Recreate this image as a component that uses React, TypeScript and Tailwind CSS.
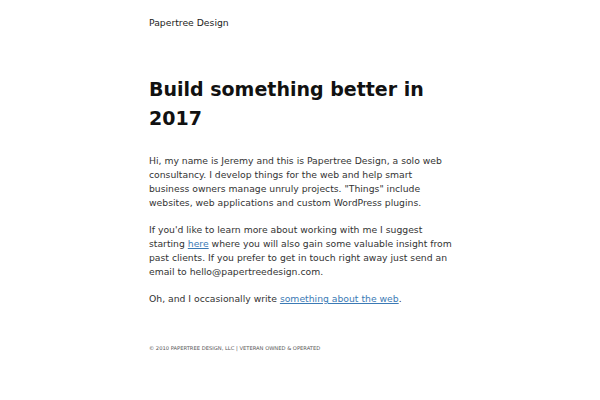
export default function App() {
  return (
    <div className="min-h-[400px] bg-white" style={{ fontFamily: '"DejaVu Sans", sans-serif' }}>
      <div className="ml-[149px] w-[306px] pt-[16px]">
        <div className="text-[9.25px] leading-[14px] text-[#222]">Papertree Design</div>
        <h1 className="mt-[45px] text-[19px] font-bold leading-[29px] text-[#111]">
          Build something better in 2017
        </h1>
        <div className="mt-[21px] text-[9.25px] leading-[14px] text-[#333]">
          <p>
            Hi, my name is Jeremy and this is Papertree Design, a solo web consultancy. I develop things for the web and help smart business owners manage unruly projects. "Things" include websites, web applications and custom WordPress plugins.
          </p>
          <p className="mt-[13px]">
            If you'd like to learn more about working with me I suggest starting{" "}
            <a className="text-[#3b7ab5] underline">here</a> where you will also gain some valuable insight from past clients. If you prefer to get in touch right away just send an email to hello@papertreedesign.com.
          </p>
          <p className="mt-[13px]">
            Oh, and I occasionally write{" "}
            <a className="text-[#3b7ab5] underline">something about the web</a>.
          </p>
        </div>
        <div className="mt-[38px] text-[5.2px] uppercase leading-[8px] text-[#555]">
          © 2010 Papertree Design, LLC | Veteran Owned &amp; Operated
        </div>
      </div>
    </div>
  );
}
